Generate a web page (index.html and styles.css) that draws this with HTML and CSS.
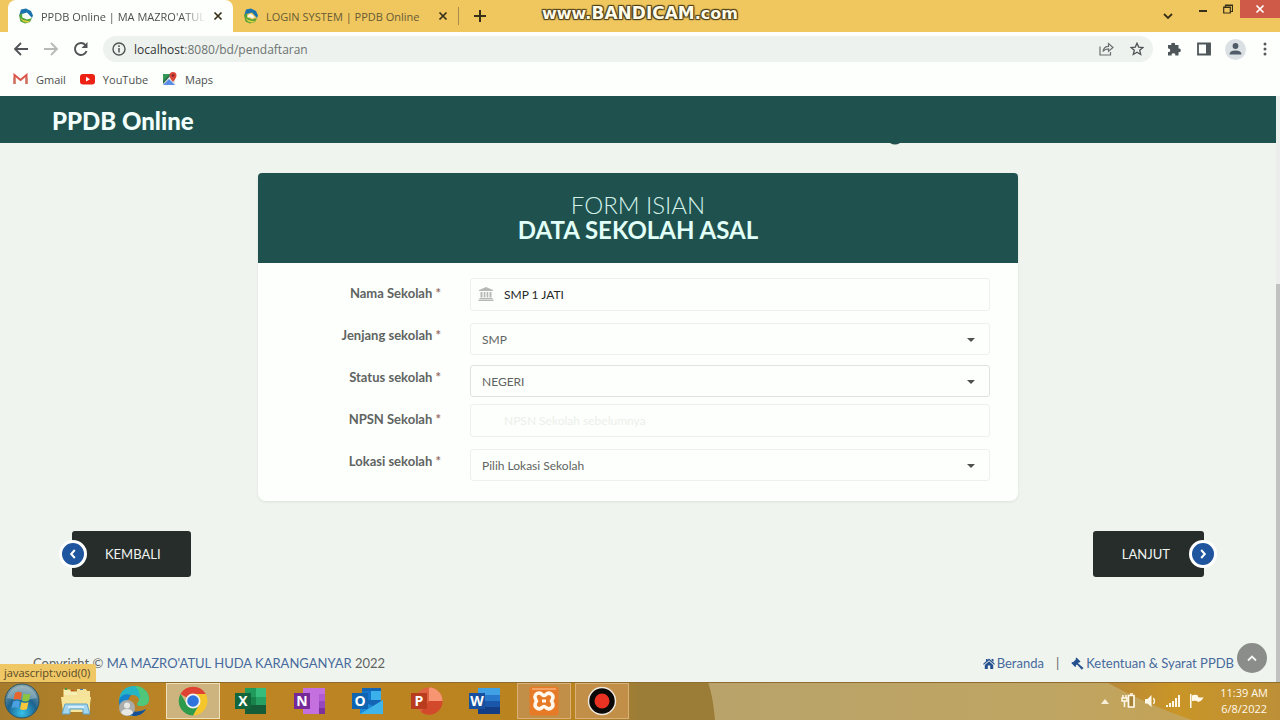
FILE: index.html
```html
<!DOCTYPE html>
<html lang="id">
<head>
<meta charset="utf-8">
<title>PPDB Online | MA MAZRO'ATUL HUDA</title>
<link rel="stylesheet" href="styles.css">
</head>
<body>
<svg class="defs" aria-hidden="true">
  <symbol id="favicon" viewBox="0 0 16 16">
    <path d="M3 1.500 8 .5l5 2.500 2 4.500-1 2.500L9 4.500 4 6 1 8Z" fill="#1a73ad"/>
    <path d="M1 7.500 4 5l.5 4.500 4.500 2 5-1.500-2 4-5 1.500-4.500-2Z" fill="#55a33a"/>
    <path d="M4.500 8q3-4.500 7 1l-2 1.500Q7 8 4.500 9.500Z" fill="#f4faf0"/>
    <path d="M2.500 10q4.500 4.500 10 2.500l-2.500 2q-5 .5-7.500-4.500Z" fill="#e4d23c"/>
  </symbol>
  <symbol id="cross" viewBox="0 0 10 10"><path d="m1.500 1.500 7 7m0-7-7 7" fill="none" stroke="currentColor" stroke-width="1.700"/></symbol>
</svg>

<div class="tabstrip">
  <div class="tab tab-active">
    <svg class="ico16"><use href="#favicon"/></svg>
    <span class="tab-title">PPDB Online | MA MAZRO'ATUL HUDA</span>
    <button class="plain" aria-label="Close tab"><svg class="ico10"><use href="#cross"/></svg></button>
  </div>
  <div class="tab">
    <svg class="ico16"><use href="#favicon"/></svg>
    <span class="tab-title">LOGIN SYSTEM | PPDB Online</span>
    <button class="plain" aria-label="Close tab"><svg class="ico10"><use href="#cross"/></svg></button>
  </div>
  <button class="plain new-tab" aria-label="New tab"><svg width="12" height="12" viewBox="0 0 12 12"><path d="M6 0v12M0 6h12" stroke="currentColor" stroke-width="2"/></svg></button>
  <div class="window-controls">
    <button class="plain search-tabs" aria-label="Search tabs"><svg width="10" height="8" viewBox="0 0 10 8"><path d="m1 2 4 4 4-4" fill="none" stroke="currentColor" stroke-width="1.800"/></svg></button>
    <button class="plain win-btn" aria-label="Minimize"><svg width="10" height="10" viewBox="0 0 10 10"><path d="M1 7h8" stroke="currentColor" stroke-width="2"/></svg></button>
    <button class="plain win-btn" aria-label="Restore"><svg width="10" height="10" viewBox="0 0 10 10"><path d="M.7 3h6.600v6H.7ZM2.500 3V1h7v6.500H7.500M.7 3.500h6.600M2.500 1.300h7" fill="none" stroke="currentColor" stroke-width="1.200"/></svg></button>
    <button class="plain win-close" aria-label="Close"><svg class="ico10"><use href="#cross"/></svg></button>
  </div>
  <div class="watermark"><small>www.</small>BANDICAM<small>.com</small></div>
</div>

<div class="toolbar">
  <button class="plain" aria-label="Back"><svg class="ico16" viewBox="0 0 16 16"><path d="M15 8H2.500M8 2 2 8l6 6" fill="none" stroke="#505456" stroke-width="1.800"/></svg></button>
  <button class="plain" aria-label="Forward"><svg class="ico16" viewBox="0 0 16 16"><path d="M1 8h12.500M8 2l6 6-6 6" fill="none" stroke="#b6b9b8" stroke-width="1.800"/></svg></button>
  <button class="plain" aria-label="Reload"><svg class="ico16" viewBox="0 0 16 16"><path d="M13.600 10A6 6 0 1 1 12.500 4" fill="none" stroke="#505456" stroke-width="1.900"/><path d="M14.500 1v6h-6Z" fill="#505456"/></svg></button>
  <div class="omnibox">
    <svg class="ico14" viewBox="0 0 14 14"><circle cx="7" cy="7" r="6" fill="none" stroke="#505456" stroke-width="1.400"/><path d="M7 6v4.500M7 3.300v1.600" stroke="#505456" stroke-width="1.500"/></svg>
    <span class="url"><b>localhost</b>:8080/bd/pendaftaran</span>
    <button class="plain" aria-label="Share"><svg width="15" height="14" viewBox="0 0 15 14"><path d="M1 4.500V13h10.500v-3M4 9.500C4.500 6 6.500 4.300 9.500 4.300V1.500L14 5.500 9.500 9.300V6.800C7 6.800 5.500 7.500 4 9.500Z" fill="none" stroke="#6b6f71" stroke-width="1.200"/></svg></button>
    <button class="plain" aria-label="Bookmark"><svg class="ico14" viewBox="0 0 14 14"><path d="m7 1.200 1.700 3.900 4.200.4-3.200 2.800 1 4.200L7 10.300l-3.700 2.200 1-4.200L1.100 5.500l4.200-.4Z" fill="none" stroke="#505456" stroke-width="1.300"/></svg></button>
  </div>
  <button class="plain" aria-label="Extensions"><svg class="ico14" viewBox="0 0 14 14"><path d="M1 3h3.300a1.900 1.900 0 1 1 3.700 0H11.500v3.500a1.900 1.900 0 1 1 0 3.700V13.500H8.200a1.800 1.800 0 1 0-3.500 0H1v-3.500a1.800 1.800 0 1 0 0-3.500Z" fill="#4f5659"/></svg></button>
  <button class="plain side-panel" aria-label="Side panel"><svg class="ico14" viewBox="0 0 14 14"><path d="M1 1.500h12v11H1Z" fill="none" stroke="#4f5659" stroke-width="1.800"/><path d="M9 1h4.500v12H9Z" fill="#4f5659"/></svg></button>
  <button class="plain" aria-label="Profile"><svg width="21" height="21" viewBox="0 0 21 21"><circle cx="10.500" cy="10.500" r="10.500" fill="#dbe0e4"/><circle cx="10.500" cy="7" r="2.900" fill="#4f5c68"/><path d="M4.500 15.500q0-4 6-4t6 4Z" fill="#4f5c68"/></svg></button>
  <button class="plain menu" aria-label="Menu"><svg width="4" height="14" viewBox="0 0 4 14" fill="#55595b"><circle cx="2" cy="2" r="1.500"/><circle cx="2" cy="7" r="1.500"/><circle cx="2" cy="12" r="1.500"/></svg></button>
</div>

<nav class="bookmarks">
  <a href="#"><svg width="15" height="12" viewBox="0 0 15 12"><path d="M1.500 11V2l6 5 6-5v9" fill="none" stroke="#dc5447" stroke-width="2"/><path d="M1.500 11V5M13.500 11V5" stroke="#c9705f" stroke-width="2"/></svg>Gmail</a>
  <a href="#"><svg width="15" height="12" viewBox="0 0 15 12"><rect y="1" width="15" height="10.500" rx="3" fill="#ed2113"/><path d="m6 3.800 4 2.400-4 2.400Z" fill="#fff"/></svg>YouTube</a>
  <a href="#"><svg width="15" height="14" viewBox="0 0 15 14"><path d="M1 2h12v11H1Z" fill="#e4ebe6"/><path d="M1 2h8L1 11Z" fill="#319a56"/><path d="m1 13 6-6 6 6Z" fill="#5a8ee6"/><path d="m1 9 7-7h2L1 12Z" fill="#2c6e4c"/><path d="M11 10Q7.500 5.500 7.500 3.500a3.500 3.500 0 0 1 7 0Q14.500 5.500 11 10Z" fill="#d9473b"/><circle cx="11" cy="3.500" r="1.200" fill="#7e2620"/></svg>Maps</a>
</nav>

<div class="viewport">
  <div class="site">
    <header class="site-header"><a class="brand" href="#">PPDB Online</a>
      <svg class="peek" width="10" height="2" viewBox="0 0 10 2"><path d="M0 0h10Q5 3 0 0Z" fill="#24504d"/></svg>
    </header>
    <main>
      <form class="card" id="school">
        <h1 class="card-head">FORM ISIAN<strong>DATA SEKOLAH ASAL</strong></h1>
        <div class="fields">
          <label for="nama">Nama Sekolah <i>*</i></label>
          <div class="control">
            <svg class="field-ico" width="16" height="14" viewBox="0 0 16 14"><path d="M8 0 15 3v1H1V3ZM2.500 5h2v5.500h-2ZM5.700 5h1.700v5.500H5.700ZM8.600 5h1.700v5.500H8.600ZM11.500 5h2v5.500h-2ZM1.500 11h13v1h-13ZM.5 12.500h15V14H.5Z" fill="#b5b9b5"/></svg>
            <input id="nama" type="text" value="SMP 1 JATI">
          </div>
          <label for="jenjang">Jenjang sekolah <i>*</i></label>
          <div class="control pick"><select id="jenjang"><option>SMP</option><option>MTs</option></select></div>
          <label for="status">Status sekolah <i>*</i></label>
          <div class="control pick pick-active"><select id="status"><option>NEGERI</option><option>SWASTA</option></select></div>
          <label for="npsn">NPSN Sekolah <i>*</i></label>
          <div class="control"><input id="npsn" type="text" placeholder="NPSN Sekolah sebelumnya"></div>
          <label for="lokasi">Lokasi sekolah <i>*</i></label>
          <div class="control pick"><select id="lokasi"><option>Pilih Lokasi Sekolah</option></select></div>
        </div>
      </form>
      <div class="actions">
        <button class="step step-prev" type="button">KEMBALI<span class="knob"><svg class="ico10" viewBox="0 0 10 10"><path d="M6.800 1 3.200 5l3.600 4" fill="none" stroke="#fff" stroke-width="2"/></svg></span></button>
        <button class="step step-next" type="submit" form="school">LANJUT<span class="knob"><svg class="ico10" viewBox="0 0 10 10"><path d="M3.200 1 6.800 5 3.200 9" fill="none" stroke="#fff" stroke-width="2"/></svg></span></button>
      </div>
    </main>
    <footer class="site-footer">
      <p>Copyright © <a href="#">MA MAZRO'ATUL HUDA KARANGANYAR</a> 2022</p>
      <nav class="footer-links">
        <a href="#"><svg width="12" height="11" viewBox="0 0 12 11"><path d="M6 .5 12 6l-.8.8L6 2.200.8 6.800 0 6l3-2.800V1h1.500v1ZM6 3.200l4.200 3.700V11H7.200V7.500H4.800V11h-3V6.900ZM8.500 1h2v3l-2-1.800Z" fill="#25508f"/></svg>Beranda</a>
        <span>|</span>
        <a href="#"><svg width="13" height="13" viewBox="0 0 13 13"><path d="m5.500.5 4 4-1 1L8 5.200 7 6.300l5.500 4.700-1.700 1.700L6 7.500 4.800 8.500l.3.800-1 .7-3.800-4 1-1 .8.300L5 2.300 4.600 1.500Z" fill="#25508f"/></svg>Ketentuan &amp; Syarat PPDB</a>
      </nav>
    </footer>
    <button class="to-top" aria-label="Ke atas"><svg width="10" height="7" viewBox="0 0 10 7"><path d="m1 5.500 4-4 4 4" fill="none" stroke="#f4f6f4" stroke-width="1.800"/></svg></button>
    <div class="status-bubble">javascript:void(0)</div>
  </div>
  <div class="scrollbar"><div class="thumb"></div></div>
</div>

<div class="taskbar">
  <svg class="wallpaper" viewBox="0 0 1280 38" preserveAspectRatio="none" aria-hidden="true">
    <defs>
      <linearGradient id="wood"><stop offset="0" stop-color="#a67c2c"/><stop offset=".15" stop-color="#be8524"/><stop offset=".45" stop-color="#b9831f"/><stop offset=".5" stop-color="#9c7d37"/><stop offset="1" stop-color="#97783a"/></linearGradient>
      <linearGradient id="sand"><stop offset="0" stop-color="#b9a36a"/><stop offset=".6" stop-color="#bfa563"/><stop offset="1" stop-color="#c7a14d"/></linearGradient>
      <linearGradient id="amber"><stop offset="0" stop-color="#b8893a"/><stop offset=".4" stop-color="#c99527"/><stop offset="1" stop-color="#bd9038"/></linearGradient>
    </defs>
    <path d="M0 0h1280v38H0Z" fill="url(#wood)"/>
    <path d="M708 0h572v38H715Q713 14 708 0Z" fill="url(#sand)"/>
    <path d="M1106 0h174v38H1192Q1150 24 1106 0Z" fill="url(#amber)"/>
    <path d="M0 0h1280v1H0Z" fill="#8e6c2f"/>
  </svg>
  <button class="plain start" aria-label="Start"><svg width="36" height="36" viewBox="0 0 36 36">
    <defs><radialGradient id="orb" cx=".5" cy=".85" r=".85"><stop offset="0" stop-color="#35c2ea"/><stop offset=".5" stop-color="#1c638f"/><stop offset="1" stop-color="#8fa9ad"/></radialGradient></defs>
    <circle cx="18" cy="18" r="17" fill="url(#orb)" stroke="#285264"/>
    <path d="M3 15Q7 3 18 3t15 12Q18 19 3 15Z" fill="#d6e3df" opacity=".35"/>
    <path d="M11 10q4-2.500 7 0l-1.500 7q-3-2-7 0Z" fill="#e8642c"/><path d="M19.500 10.500q3.500 2 7 0l-1.500 7q-3.500 2-7 0Z" fill="#8cc43e"/>
    <path d="M9 18.500q4-2 7 0l-1.500 7q-3-2.500-7 0Z" fill="#4aa0e0"/><path d="M17.500 19q3.500 2 7 0L23 26q-3.500 2-7 0Z" fill="#f8c83a"/></svg></button>
  <div class="apps">
    <button class="app" aria-label="Explorer"><svg width="32" height="30" viewBox="0 0 32 30"><path d="M3 3h7l1 2h16v21H3Z" fill="#d8b75e"/><path d="M4 4h6l1 2h15v5H4Z" fill="#f7eeb4"/><path d="M17 3h9l1 2h3v21H4V9h13Z" fill="#f5e39c"/><path d="M5 2h2v2H5Z" fill="#479b47"/><path d="M11 4h3v1h-3Z" fill="#c94b35"/><path d="M20 3h3v1h-3Z" fill="#4b7fc4"/><path d="M1 11h30l-2 15H3Z" fill="#f5e69c"/><path d="M5 18h22l3 10h-7v-5H10v5H2Z" fill="#a3d5ef" stroke="#5fa2c6"/><path d="M8 20h16v2H8Z" fill="#d6effa"/></svg></button>
    <button class="app" aria-label="Edge"><svg width="32" height="32" viewBox="0 0 32 32"><path d="M1 17C1 6 8 1 16 1c9 0 15 6 15 13 0 5-4 7-8 7-3 0-4-1-4-2s2-2 2-4c0-3-3-5-7-5C7 10 2 14 1 17Z" fill="#26b5c4"/><path d="M17 1c8 0 14 6 14 13 0 5-4 7-8 7-3 0-4-1-4-2s2-2 2-4Q24 8 17 1Z" fill="#50c778"/><path d="M1 17C1 10 8 8 13 10q-4 4-3 10c1 7 9 9 18 4-3 5-8 7-12 7C7 31 1 25 1 17Z" fill="#1684cc"/><path d="M13 10q-4 4-3 10c1 7 9 9 18 4-3 5-8 7-12 7-6-2-9-16-3-21Z" fill="#164f94"/><circle cx="9" cy="23" r="8" fill="#a9acaa"/><circle cx="9" cy="20.500" r="3" fill="#e8e8e5"/><path d="M3 28q1-4 6-4t6 4q-6 5-12 0Z" fill="#e8e8e5"/></svg></button>
    <button class="app app-open" aria-label="Chrome"><svg width="30" height="30" viewBox="0 0 30 30"><path d="M15 15 2.500 8A14.500 14.500 0 0 1 27.700 8H15Z" fill="#df4232"/><path d="M15 15 15 8h12.700A14.500 14.500 0 0 1 15 29.500l6-11Z" fill="#f5c62c"/><path d="m15 15 6 3.500-6 11A14.500 14.500 0 0 1 2.500 8l6.500 10.500Z" fill="#2e9a4c"/><circle cx="15" cy="15" r="7.500" fill="#f3f4f1"/><circle cx="15" cy="15" r="5.800" fill="#2f74dd"/></svg></button>
    <button class="app" aria-label="Excel"><svg width="32" height="28" viewBox="0 0 32 28"><path d="M10 1h21v26H10Z" fill="#17834a"/><path d="M10 1h11v9H10Z" fill="#219b5c"/><path d="M21 1h10v9H21Z" fill="#35bd7b"/><path d="M10 18h21v9H10Z" fill="#155c38"/><path d="M21 10h10v8H21Z" fill="#26a063"/><path d="M0 6h16v16H0Z" fill="#12663b"/><text class="tile-letter" x="8" y="19">X</text></svg></button>
    <button class="app" aria-label="OneNote"><svg width="32" height="28" viewBox="0 0 32 28"><path d="M9 1h22v26H9Z" fill="#c470df"/><path d="M25 7h6v7h-6Z" fill="#b35bd3"/><path d="M25 14h6v7h-6Z" fill="#9747bd"/><path d="M25 21h6v6h-6Z" fill="#7c319e"/><path d="M0 6h16v16H0Z" fill="#762a99"/><text class="tile-letter" x="8" y="19">N</text></svg></button>
    <button class="app" aria-label="Outlook"><svg width="32" height="28" viewBox="0 0 32 28"><path d="M10 1h19v18H10Z" fill="#1565b5"/><path d="M19 4h10v9H19Z" fill="#3bb1ec"/><path d="M10 4h9v9h-9Z" fill="#1475cc"/><path d="m8 13 13 6 10-6v14H8Z" fill="#1b87d6"/><path d="m8 27 23-14v14Z" fill="#40b5e9"/><path d="M0 6h16v16H0Z" fill="#1065b3"/><text class="tile-letter" x="8" y="19">O</text></svg></button>
    <button class="app" aria-label="PowerPoint"><svg width="32" height="28" viewBox="0 0 32 28"><circle cx="18" cy="14" r="13.500" fill="#df6241"/><path d="M18 .5A13.500 13.500 0 0 1 31.500 14H18Z" fill="#f79572"/><path d="M18 14h13.500A13.500 13.500 0 0 1 10 25Z" fill="#d3492b"/><path d="M0 6h16v16H0Z" fill="#b93c1f"/><text class="tile-letter" x="8" y="19">P</text></svg></button>
    <button class="app" aria-label="Word"><svg width="32" height="28" viewBox="0 0 32 28"><path d="M9 1h22v7H9Z" fill="#40a1e5"/><path d="M9 8h22v6H9Z" fill="#2878cc"/><path d="M9 14h22v6H9Z" fill="#1a56aa"/><path d="M9 20h22v7H9Z" fill="#133e85"/><path d="M0 6h16v16H0Z" fill="#184f9e"/><text class="tile-letter" x="8" y="19">W</text></svg></button>
    <button class="app app-running" aria-label="XAMPP"><svg width="30" height="30" viewBox="0 0 30 30"><rect x=".5" y=".5" width="29" height="29" rx="3" fill="#e77a26"/><path d="M3 2h24v2H3Z" fill="#f2a365"/><path d="M10 7a4 4 0 0 0-3.500 6q1 2 1 2t-1 2A4 4 0 0 0 13 21.500q2-2 4 0A4 4 0 0 0 23.500 17l-1-2 1-2A4 4 0 0 0 17 8.500q-2 2-4 0-1-1.500-3-1.500Z" fill="none" stroke="#fff7ec" stroke-width="3.500"/><path d="M13 15h4" stroke="#fff7ec" stroke-width="3"/></svg></button>
    <button class="app app-running" aria-label="Bandicam"><svg width="30" height="30" viewBox="0 0 30 30"><circle cx="15" cy="15" r="13.500" fill="#0b0908" stroke="#efe8dd" stroke-width="1.500"/><circle cx="15" cy="15" r="7.500" fill="#ea3223"/></svg></button>
  </div>
  <div class="tray">
    <svg width="8" height="5" viewBox="0 0 8 5"><path d="m4 0 4 5H0Z" fill="#f8efd8"/></svg>
    <svg width="15" height="16" viewBox="0 0 15 16"><path d="M7.500 2.500h5.500v11.500H7.500Z" fill="#a58235" stroke="#fff9ea" stroke-width="1.700"/><path d="M9 1h3M2 2v3m3-3v3M1 5h5v3H1ZM3.500 8v6" fill="none" stroke="#fff9ea" stroke-width="1.500"/></svg>
    <svg width="14" height="14" viewBox="0 0 14 14"><path d="M1 5h2.500L7.500 1v12L3.500 9.500H1Z" fill="#fff9ea"/><path d="M9.500 4q2 3 0 6" fill="none" stroke="#fff9ea" stroke-width="1.300"/></svg>
    <svg width="15" height="12" viewBox="0 0 15 12" fill="#fff9ea"><path d="M0 10h2v2H0ZM3 8h2v4H3ZM6 6h2v6H6ZM9 3h2v9H9ZM12 0h2v12h-2Z"/></svg>
    <svg width="15" height="14" viewBox="0 0 15 14" fill="#fff9ea"><path d="M1 0h1.500v14H1ZM3 1.500q3-1.500 6 0v1.500q2.500 1 5.500 0-1 4-5.500 5-1-2-6-1Z"/></svg>
    <time class="clock"><span>11:39 AM</span><span>6/8/2022</span></time>
  </div>
</div>
</body>
</html>
```
FILE: styles.css
```css
* { box-sizing: border-box; }
body {
  margin: 0;
  min-height: 100vh;
  display: flex;
  flex-direction: column;
  font-family: "Open Sans", sans-serif;
  font-size: 11px;
  color: #4c4f4e;
  background: #fdfffc;
}
a { color: inherit; text-decoration: none; }
button, input, select { font: inherit; color: inherit; }
svg { display: block; flex: none; }
.defs { position: absolute; width: 0; height: 0; }
.ico16 { width: 16px; height: 16px; }
.ico14 { width: 14px; height: 14px; }
.ico10 { width: 10px; height: 10px; }
.plain {
  display: grid;
  place-items: center;
  padding: 0;
  border: 0;
  background: none;
}

/* Browser chrome */
.tabstrip {
  position: relative;
  display: flex;
  height: 32px;
  padding-left: 8px;
  background: #f0c75e;
  color: #373019;
}
.tab {
  display: flex;
  align-items: center;
  gap: 7px;
  width: 225px;
  padding: 0 10px;
  color: #675a35;
}
.tab .plain { color: #373019; }
.tab-active {
  background: #fdfffc;
  border-radius: 8px 8px 0 0;
  color: #4c4f4e;
}
.tab-title {
  flex: 1;
  overflow: hidden;
  white-space: nowrap;
}
.tab-active .tab-title { mask-image: linear-gradient(to left, transparent, #000 24px); }
.new-tab { width: 42px; border-left: 1px solid #a58d49; height: 18px; margin: 7px 0; }
.window-controls {
  display: flex;
  align-items: flex-start;
  margin-left: auto;
}
.search-tabs { width: 24px; height: 32px; margin-right: 10px; }
.win-btn { width: 25px; height: 18px; }
.win-close { width: 40px; height: 18px; background: #cf5a48; color: #fff; }
.watermark {
  position: absolute;
  left: 50%;
  top: 3px;
  transform: translateX(-50%);
  font: bold 17px/20px "DejaVu Sans", sans-serif;
  color: #fffbe8;
  text-shadow: 1px 1px 1px #4a3d18, -1px -1px 1px #4a3d18, 1px -1px 1px #4a3d18, -1px 1px 1px #4a3d18;
}
.watermark small { font-size: 16px; }

.toolbar {
  display: flex;
  align-items: center;
  gap: 14px;
  height: 34px;
  padding: 0 13px;
}
.side-panel { margin-left: 2px; }
.menu { margin-left: 3px; }
.omnibox {
  flex: 1;
  display: flex;
  align-items: center;
  gap: 8px;
  height: 26px;
  padding: 0 9px;
  border-radius: 13px;
  background: #edf2ee;
}
.url { flex: 1; font-size: 12px; color: #6e7271; }
.url b { font-weight: 400; color: #323635; }
.omnibox .plain { margin-left: 8px; }
.bookmarks {
  display: flex;
  align-items: center;
  gap: 14px;
  height: 30px;
  padding: 0 13px 4px;
}
.bookmarks a { display: flex; align-items: center; gap: 8px; }

/* Web page */
.viewport { flex: 1; display: flex; }
.site {
  position: relative;
  flex: 1;
  display: flex;
  flex-direction: column;
  background: #f0f4ef;
  font-family: Lato, sans-serif;
  font-size: 13px;
  color: #5f6462;
}
.site-header {
  position: relative;
  padding: 10px 52px 7px;
  background: #1f524f;
}
.brand { font-size: 24px; line-height: 30px; font-weight: 900; color: #f2fffc; display: block; }
.peek { position: absolute; top: 100%; left: 70%; margin-left: -3px; }
.card {
  width: 60%;
  max-width: 760px;
  margin: 30px auto;
  border-radius: 4px 4px 8px 8px;
  background: #fdfffc;
  box-shadow: 0 1px 3px rgba(0, 0, 0, .08);
}
.card-head {
  margin: 0;
  padding: 19px 20px 21px;
  border-radius: 4px 4px 0 0;
  background: #1f524f;
  color: #d3f1ea;
  text-align: center;
  font-size: 24px;
  line-height: 25px;
  font-weight: 300;
}
.card-head strong { display: block; color: #e2fff8; font-weight: 700; }
.fields {
  display: grid;
  grid-template-columns: 183px 1fr;
  grid-auto-rows: 42px;
  column-gap: 29px;
  padding: 15px 28px 13px 0;
}
.fields label {
  text-align: right;
  line-height: 30px;
  font-weight: 700;
}
.fields i { font-style: normal; color: #98706a; }
.control { position: relative; font-size: 12px; }
.control input, .control select {
  display: block;
  width: 100%;
  border: 1px solid #edf1ed;
  border-radius: 3px;
  background: #fdfffc;
}
.control input { height: 33px; padding: 0 33px; color: #262a29; }
.control input::placeholder { color: #ebefeb; opacity: 1; }
.pick { padding-top: 3px; }
.control select { appearance: none; height: 32px; padding: 0 11px; }
.control.pick-active select { border-color: #dde3de; }
.pick::after {
  content: "";
  position: absolute;
  right: 15px;
  top: 18px;
  border: 4px solid transparent;
  border-top-color: #4c504e;
  border-bottom: 0;
}
.field-ico { position: absolute; left: 8px; top: 9px; }

.actions {
  display: flex;
  justify-content: space-between;
  padding: 0 72px;
}
.step {
  position: relative;
  height: 46px;
  border: 0;
  border-radius: 3px;
  background: #262d2b;
  color: #f0f4f1;
}
.step-prev { padding: 0 30px 0 33px; }
.step-next { padding: 0 34px 0 29px; }
.knob {
  position: absolute;
  top: 9px;
  display: grid;
  place-items: center;
  width: 28px;
  height: 28px;
  border: 3px solid #fff;
  border-radius: 50%;
  background: #1f559e;
}
.step-prev .knob { left: -13px; }
.step-next .knob { right: -13px; }

.site-footer {
  display: flex;
  justify-content: space-between;
  margin-top: auto;
  padding: 0 42px 9px 33px;
  line-height: 20px;
}
.site-footer p { margin: 0; }
.site-footer a { color: #476a9c; }
.footer-links { display: flex; gap: 12px; }
.footer-links a { display: flex; align-items: center; gap: 2px; }
.to-top {
  position: absolute;
  right: 9px;
  bottom: 9px;
  display: grid;
  place-items: center;
  width: 30px;
  height: 30px;
  padding: 0;
  border: 0;
  border-radius: 50%;
  background: #8a8d8a;
}
.status-bubble {
  position: absolute;
  left: 0;
  bottom: 0;
  padding: 0 6px 0 4px;
  border-radius: 0 3px 0 0;
  background: #f0c765;
  color: #574a28;
  font: 11px/18px "Open Sans", sans-serif;
}
.scrollbar {
  width: 4px;
  display: flex;
  flex-direction: column;
  justify-content: flex-end;
  background: #eceeeb;
}
.thumb { height: 68%; background: #c0c2c0; }

/* Taskbar */
.taskbar {
  position: relative;
  display: flex;
  align-items: center;
  height: 38px;
}
.taskbar > * { position: relative; }
.taskbar > .wallpaper { position: absolute; inset: 0; width: 100%; height: 100%; }
.start { width: 44px; }
.apps {
  display: flex;
  justify-content: space-between;
  width: 580px;
  margin-left: 5px;
}
.app {
  display: grid;
  place-items: center;
  width: 54px;
  height: 36px;
  padding: 0;
  border: 1px solid transparent;
  background: none;
}
.app-open { border-color: #f0dfb8; background: #cdb37d; }
.app-running { border-color: #d9b078; background: #c18f47; }
.tile-letter {
  font: bold 14px "Open Sans", sans-serif;
  text-anchor: middle;
  fill: #fff;
}
.tray {
  display: flex;
  align-items: center;
  gap: 8px;
  margin-left: auto;
  padding-right: 12px;
}
.tray > svg:first-child { margin-right: 4px; }
.clock {
  display: grid;
  margin-left: 8px;
  color: #fff9ea;
  text-align: center;
  line-height: 16px;
}
```
